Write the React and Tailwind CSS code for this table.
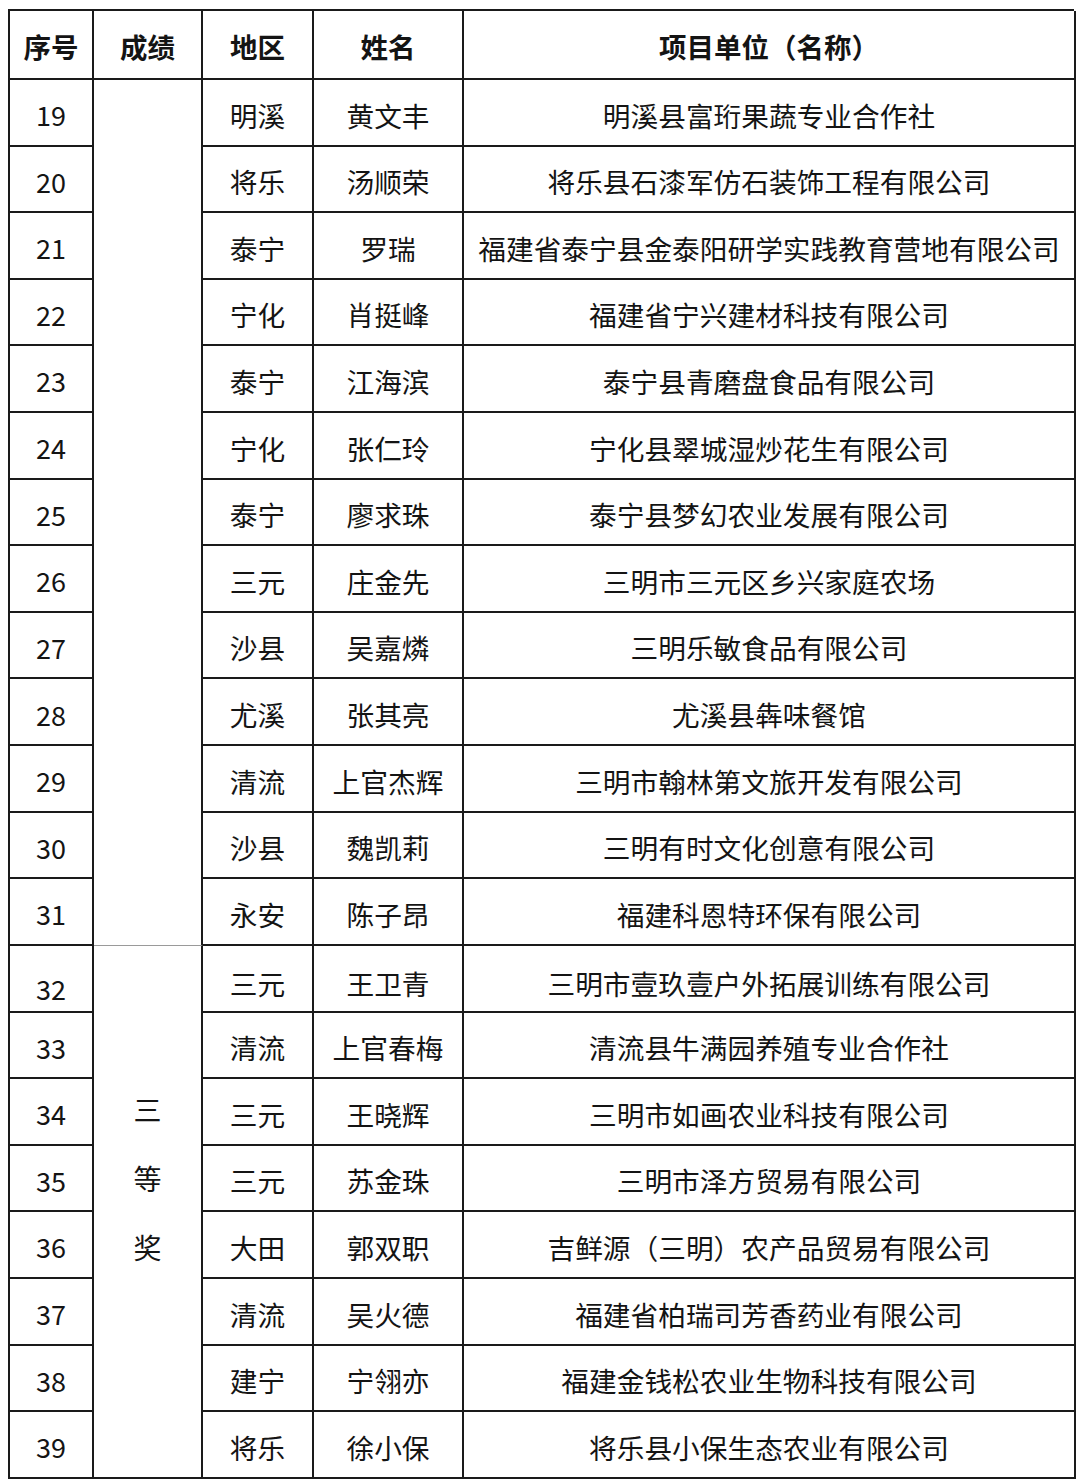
const rows = [
  ["19", "明溪", "黄文丰", "明溪县富珩果蔬专业合作社"],
  ["20", "将乐", "汤顺荣", "将乐县石漆军仿石装饰工程有限公司"],
  ["21", "泰宁", "罗瑞", "福建省泰宁县金泰阳研学实践教育营地有限公司"],
  ["22", "宁化", "肖挺峰", "福建省宁兴建材科技有限公司"],
  ["23", "泰宁", "江海滨", "泰宁县青磨盘食品有限公司"],
  ["24", "宁化", "张仁玲", "宁化县翠城湿炒花生有限公司"],
  ["25", "泰宁", "廖求珠", "泰宁县梦幻农业发展有限公司"],
  ["26", "三元", "庄金先", "三明市三元区乡兴家庭农场"],
  ["27", "沙县", "吴嘉燐", "三明乐敏食品有限公司"],
  ["28", "尤溪", "张其亮", "尤溪县犇味餐馆"],
  ["29", "清流", "上官杰辉", "三明市翰林第文旅开发有限公司"],
  ["30", "沙县", "魏凯莉", "三明有时文化创意有限公司"],
  ["31", "永安", "陈子昂", "福建科恩特环保有限公司"],
  ["32", "三元", "王卫青", "三明市壹玖壹户外拓展训练有限公司"],
  ["33", "清流", "上官春梅", "清流县牛满园养殖专业合作社"],
  ["34", "三元", "王晓辉", "三明市如画农业科技有限公司"],
  ["35", "三元", "苏金珠", "三明市泽方贸易有限公司"],
  ["36", "大田", "郭双职", "吉鲜源（三明）农产品贸易有限公司"],
  ["37", "清流", "吴火德", "福建省柏瑞司芳香药业有限公司"],
  ["38", "建宁", "宁翎亦", "福建金钱松农业生物科技有限公司"],
  ["39", "将乐", "徐小保", "将乐县小保生态农业有限公司"],
];

const font = { fontFamily: '"Noto Sans CJK SC", "Noto Sans", sans-serif' };

function Cell({ children, className = "" }) {
  return (
    <div
      className={
        "flex items-center justify-center border-r-2 border-b-2 border-[#1a1a1a] whitespace-nowrap " +
        className
      }
    >
      {children}
    </div>
  );
}

export default function App() {
  return (
    <div className="min-h-[1482px] w-[1080px] bg-white pl-[8px] pt-[9px] text-[#141414]" style={font}>
      <div className="grid w-[1066px] grid-cols-[84px_109px_111px_150px_612px] grid-rows-[69px_repeat(21,66.62px)] border-l-2 border-t-2 border-[#1a1a1a]">
        <Cell className="pt-[5px] text-[27.5px] font-bold">序号</Cell>
        <Cell className="pt-[5px] text-[27.5px] font-bold">成绩</Cell>
        <Cell className="pt-[5px] text-[27.5px] font-bold">地区</Cell>
        <Cell className="pt-[5px] text-[27.5px] font-bold">姓名</Cell>
        <Cell className="pt-[5px] text-[27.5px] font-bold">项目单位（名称）</Cell>
        {rows.map((r, i) => (
          <div key={r[0]} className="contents">
            <Cell className={"col-start-1 text-[27px] " + (r[0] === "32" ? "pt-[22px]" : "pt-[6px]")}>{r[0]}</Cell>
            {i === 0 && (
              <div className="col-start-2 row-span-13 border-r-2 border-b border-r-[#1a1a1a] border-b-[#9a9a9a]" />
            )}
            {i === 13 && (
              <div className="col-start-2 row-span-8 flex flex-col items-center justify-center gap-[41px] border-r-2 border-b-2 border-[#1a1a1a] pb-[66px] text-[28px] leading-none">
                <span>三</span>
                <span>等</span>
                <span>奖</span>
              </div>
            )}
            <Cell className={"col-start-3 text-[27.7px] " + (r[0] === "32" ? "pt-[12px]" : "pt-[6px]")}>{r[1]}</Cell>
            <Cell className={"col-start-4 text-[27.7px] " + (r[0] === "32" ? "pt-[12px]" : "pt-[6px]")}>{r[2]}</Cell>
            <Cell className={"col-start-5 text-[27.7px] " + (r[0] === "32" ? "pt-[12px]" : "pt-[6px]")}>{r[3]}</Cell>
          </div>
        ))}
      </div>
    </div>
  );
}
